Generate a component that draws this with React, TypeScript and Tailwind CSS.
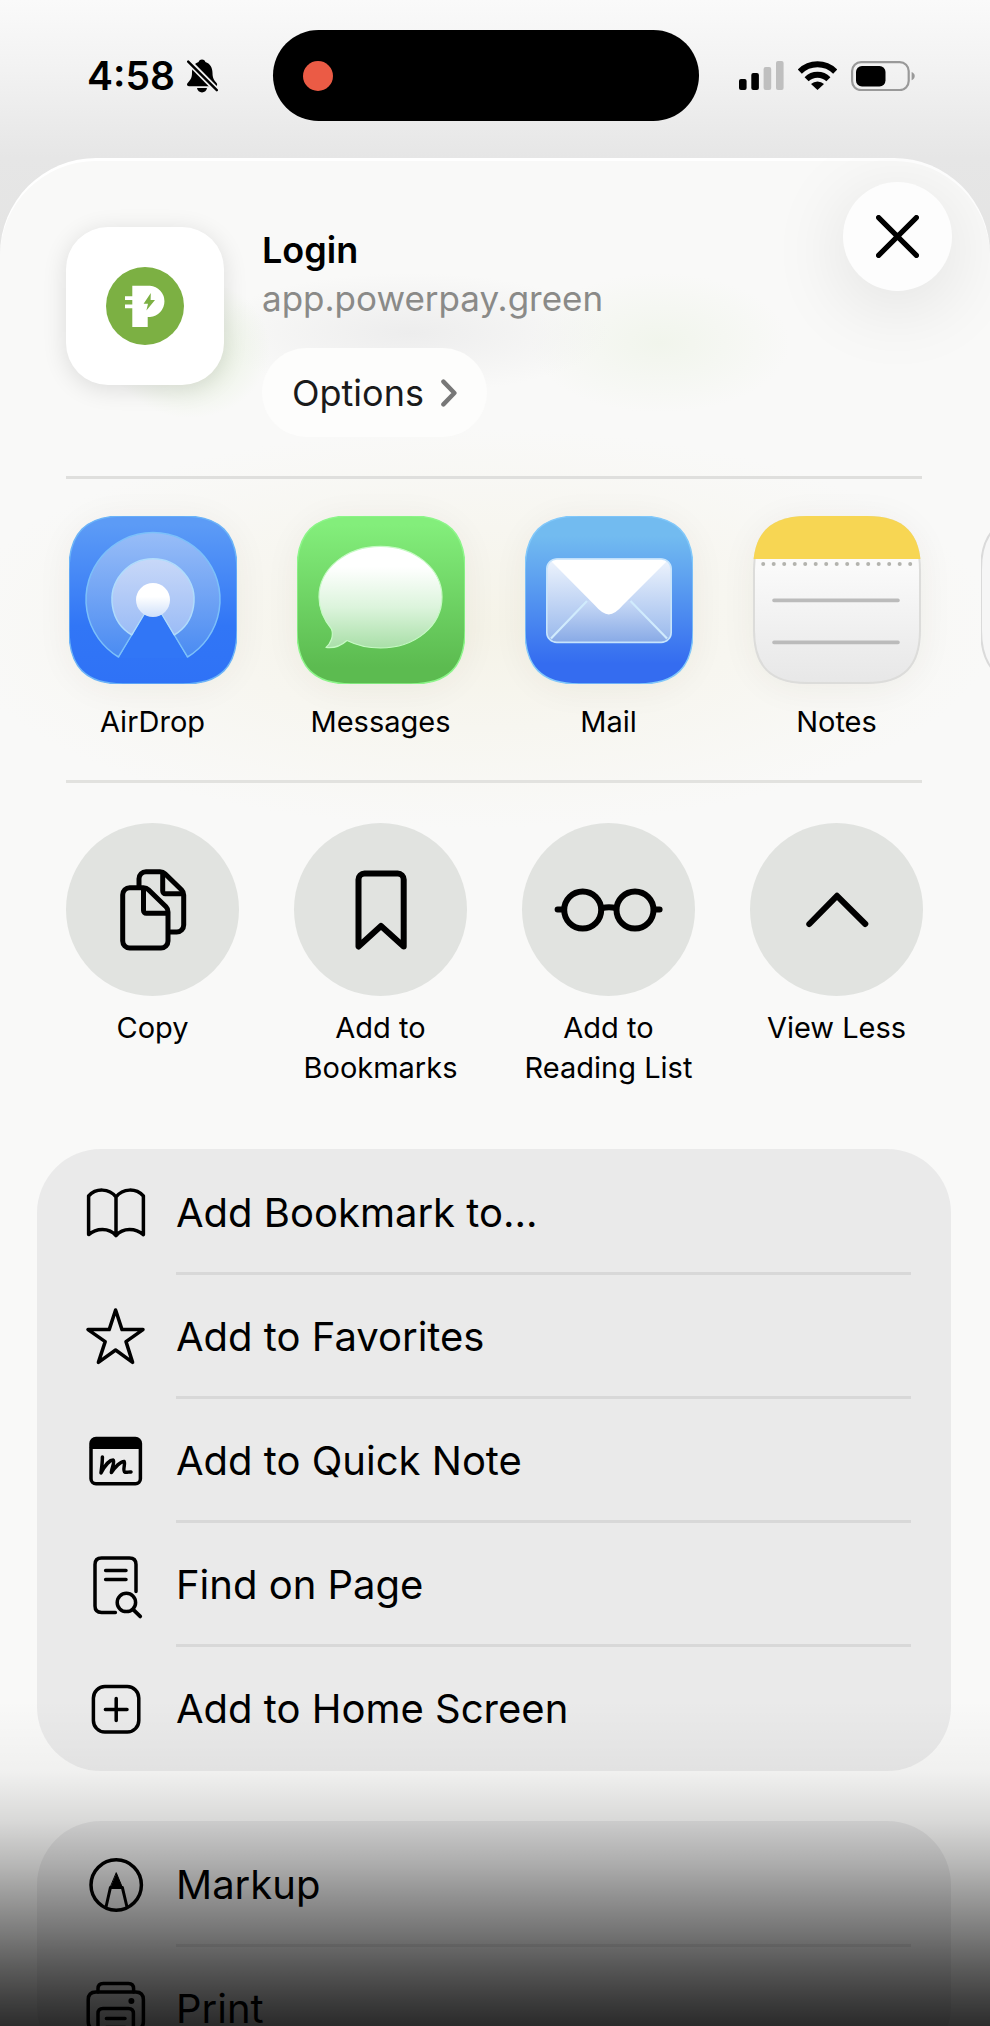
import type { ReactNode } from 'react';

interface Item {
  label: string;
  icon: ReactNode;
}

const SQUIRCLE =
  'M0 54C0 17 17 0 54 0H114C151 0 168 17 168 54V114C168 151 151 168 114 168H54C17 168 0 151 0 114Z';

function BellOff() {
  return (
    <svg className="h-[34px] w-[31px]" viewBox="0 0 31 34" aria-hidden="true">
      <mask id="bell-cut">
        <rect width="31" height="34" fill="#fff" />
        <path d="M-1 0L32 33.5" stroke="#000" strokeWidth="6" />
      </mask>
      <g mask="url(#bell-cut)">
        <path d="M15 .5C17 .5 18 1.6 18.4 3C23 4.5 25.5 8.5 25.5 14C25.5 19.5 27.5 21.5 29.5 24C30.8 25.8 30 27.3 28 27.3H2C0 27.3-.6 25.6.6 24C2.6 21.6 5 20 5 14C5 8.5 7 4.5 11.6 3C12 1.6 13 .5 15 .5Z" />
        <path d="M10 29H20C19.6 31.8 17.6 33.4 15 33.4S10.4 31.8 10 29Z" />
      </g>
      <path d="M1.2 2.6L29.8 31.2" stroke="#000" strokeWidth="2.4" strokeLinecap="round" />
    </svg>
  );
}

function Signal() {
  return (
    <svg className="h-[30px] w-[45px]" viewBox="0 0 45 30" aria-hidden="true">
      <rect x="0" y="18" width="7.6" height="11" rx="2" />
      <rect x="12.3" y="12" width="7.6" height="17" rx="2" />
      <rect x="24.6" y="6" width="7.6" height="23" rx="2" fill="#bfbfbf" />
      <rect x="37" y="0" width="7.6" height="29" rx="2" fill="#bfbfbf" />
    </svg>
  );
}

function Wifi() {
  return (
    <svg className="h-[30px] w-[39px]" viewBox="0 0 39 30" aria-hidden="true">
      <g fill="none" stroke="#000" strokeWidth="5.8">
        <path d="M1.8 10.6A25 25 0 0 1 37.2 10.6" />
        <path d="M8.6 18.2A15.6 15.6 0 0 1 30.4 18.2" />
      </g>
      <path d="M19.5 29L13 23A9.4 9.4 0 0 1 26 23Z" />
    </svg>
  );
}

function Battery() {
  return (
    <svg className="h-[30px] w-[64px]" viewBox="0 0 64 30" aria-hidden="true">
      <rect x="1.1" y="1.1" width="56.6" height="28" rx="9" fill="none" stroke="#999" strokeWidth="2.2" />
      <rect x="5" y="5" width="29.5" height="20.5" rx="6" />
      <path d="M60.6 11C64.8 12.4 64.8 17.8 60.6 19.2Z" fill="#999" />
    </svg>
  );
}

function PowerPayLogo() {
  return (
    <svg className="size-[78px]" viewBox="0 0 78 78" aria-hidden="true">
      <circle cx="39" cy="39" r="39" fill="#7cb043" />
      <path
        d="M26.3 18.7H44A15.7 15.7 0 0 1 44 50H41.7V60H26.3V41.2H19V37.4H26.3V33H19V29.2H26.3Z"
        fill="#fff"
      />
      <path d="M44.8 26L37.6 36.8H42L40.4 43.4L49 33H44.6Z" fill="#7cb043" />
    </svg>
  );
}

function AirDropIcon() {
  return (
    <svg viewBox="0 0 168 168" aria-hidden="true">
      <defs>
        <linearGradient id="ad-bg" x1="0" y1="0" x2="0" y2="1">
          <stop offset=".05" stopColor="#5c9bf6" />
          <stop offset=".65" stopColor="#3176f6" />
          <stop offset="1" stopColor="#2f72f6" />
        </linearGradient>
        <linearGradient id="ad-outer" x1="0" y1="0" x2="0" y2="1">
          <stop offset="0" stopColor="#98bdf7" />
          <stop offset="1" stopColor="#4a8bf2" />
        </linearGradient>
        <linearGradient id="ad-inner" x1="0" y1="0" x2="0" y2="1">
          <stop offset="0" stopColor="#c8d8f8" />
          <stop offset="1" stopColor="#9bbcf6" />
        </linearGradient>
        <linearGradient id="ad-dot" x1="0" y1="0" x2="0" y2="1">
          <stop offset=".4" stopColor="#fff" />
          <stop offset="1" stopColor="#cfe0fa" />
        </linearGradient>
      </defs>
      <path d={SQUIRCLE} fill="url(#ad-bg)" stroke="#6cb4f8" strokeWidth="1.5" />
      <path
        d="M49.5 141A67 67 0 1 1 118.5 141L84 84Z"
        fill="url(#ad-outer)"
        stroke="#7cc0fa"
        strokeWidth="1.5"
        strokeLinejoin="round"
      />
      <path
        d="M62.9 119A41 41 0 1 1 105.1 119L84 84Z"
        fill="url(#ad-inner)"
        stroke="#b0dcfc"
        strokeWidth="1.5"
        strokeLinejoin="round"
      />
      <path d="M75.5 99L51 140.5V142H117V140.5L92.5 99Z" fill="#3176f6" />
      <circle cx="84" cy="84" r="17" fill="url(#ad-dot)" />
    </svg>
  );
}

function MessagesIcon() {
  return (
    <svg viewBox="0 0 168 168" aria-hidden="true">
      <defs>
        <linearGradient id="ms-bg" x1="0" y1="0" x2="0" y2="1">
          <stop offset=".05" stopColor="#83ee7b" />
          <stop offset=".9" stopColor="#5cbb50" />
        </linearGradient>
        <linearGradient id="ms-bubble" x1="0" y1="0" x2="0" y2="1">
          <stop offset=".2" stopColor="#fff" />
          <stop offset=".6" stopColor="#dcf4dc" />
          <stop offset="1" stopColor="#a9dfa8" />
        </linearGradient>
      </defs>
      <path d={SQUIRCLE} fill="url(#ms-bg)" stroke="#8df58a" strokeWidth="1.5" />
      <path
        d="M83.5 30.3C118 30.3 145 53 145 81C145 110 118 132 83.5 132C71 132 60 129.5 50 124.5C45 129 37 132.5 29 131.5C33.5 128 37 120 34.5 113C27 104 22 94 22 81C22 53 49 30.3 83.5 30.3Z"
        fill="url(#ms-bubble)"
        stroke="#c6fac4"
        strokeWidth="1.2"
        strokeLinejoin="round"
      />
    </svg>
  );
}

function MailIcon() {
  return (
    <svg viewBox="0 0 168 168" aria-hidden="true">
      <defs>
        <linearGradient id="ml-bg" x1="0" y1="0" x2="0" y2="1">
          <stop offset=".12" stopColor="#72bbf0" />
          <stop offset=".88" stopColor="#346cf0" />
        </linearGradient>
        <linearGradient id="ml-env" x1="0" y1="0" x2="0" y2="1">
          <stop offset="0" stopColor="#eef4fd" />
          <stop offset="1" stopColor="#98b8ec" />
        </linearGradient>
        <linearGradient id="ml-low" x1="0" y1="0" x2="0" y2="1">
          <stop offset=".1" stopColor="#c9daf6" />
          <stop offset="1" stopColor="#88aae6" />
        </linearGradient>
      </defs>
      <path d={SQUIRCLE} fill="url(#ml-bg)" stroke="#82c8fa" strokeWidth="1.5" />
      <rect x="21.8" y="43" width="124.4" height="83.4" rx="10" fill="url(#ml-env)" />
      <path d="M26 123L62 85L83.7 80L105 85L142 123Q138 126.4 134 126.4H34Q29 126.4 26 123Z" fill="url(#ml-low)" />
      <path d="M62 85L26 122.6M105.5 85L142 122.6" fill="none" stroke="#d0ebfd" strokeWidth="2.2" />
      <path d="M26 45Q29 42.6 33 42.6H135Q139 42.6 142 45L98 89Q90 98.4 83.8 98.4T69.6 89Z" fill="#fff" />
      <rect x="21.8" y="43" width="124.4" height="83.4" rx="10" fill="none" stroke="#c6e4fc" strokeWidth="1.6" />
    </svg>
  );
}

function NotesIcon() {
  return (
    <svg viewBox="0 0 168 168" aria-hidden="true">
      <defs>
        <clipPath id="nt-clip">
          <path d={SQUIRCLE} />
        </clipPath>
        <linearGradient id="nt-bg" x1="0" y1="0" x2="0" y2="1">
          <stop offset=".3" stopColor="#fafafa" />
          <stop offset="1" stopColor="#e7e7e7" />
        </linearGradient>
      </defs>
      <g clipPath="url(#nt-clip)">
        <path d={SQUIRCLE} fill="url(#nt-bg)" stroke="#dcdcda" strokeWidth="4" />
        <rect width="168" height="43" fill="#f7d653" />
      </g>
      {Array.from({ length: 15 }, (_, i) => (
        <circle key={i} cx={10.2 + i * 10.5} cy="48" r="2" fill="#b3b3ae" />
      ))}
      <path d="M21 84.4H145M21 126.4H145" stroke="#bbb" strokeWidth="3.6" strokeLinecap="round" />
    </svg>
  );
}

function BlankIcon() {
  return (
    <svg viewBox="0 0 168 168" aria-hidden="true">
      <path d={SQUIRCLE} fill="#f6f6f6" stroke="#dadada" strokeWidth="2" />
    </svg>
  );
}

function ActionSvg({ children }: { children: ReactNode }) {
  return (
    <svg
      className="size-24 overflow-visible"
      viewBox="0 0 96 96"
      fill="none"
      stroke="#000"
      strokeWidth="6"
      strokeLinecap="round"
      strokeLinejoin="round"
      aria-hidden="true"
    >
      {children}
    </svg>
  );
}

function RowSvg({ children }: { children: ReactNode }) {
  return (
    <svg
      className="size-16 shrink-0 overflow-visible"
      viewBox="0 0 64 64"
      fill="none"
      stroke="#000"
      strokeWidth="3.5"
      strokeLinecap="round"
      strokeLinejoin="round"
      aria-hidden="true"
    >
      {children}
    </svg>
  );
}

const apps: Item[] = [
  { label: 'AirDrop', icon: <AirDropIcon /> },
  { label: 'Messages', icon: <MessagesIcon /> },
  { label: 'Mail', icon: <MailIcon /> },
  { label: 'Notes', icon: <NotesIcon /> },
];

const actions: Item[] = [
  {
    label: 'Copy',
    icon: (
      <ActionSvg>
        <g strokeWidth="5">
          <path d="M34 25V16.7A7 7 0 0 1 41 9.7H55Q58 9.7 60 11.7L76.7 28Q78.7 30 78.7 33V63A7 7 0 0 1 71.7 70H64" />
          <path d="M57.7 11V29A2.7 2.7 0 0 0 60.4 31.7H77" />
          <path d="M63 50V79A7 7 0 0 1 56 86H24.7A7 7 0 0 1 17.7 79V32.7A7 7 0 0 1 24.7 25.7H38.5Q41.5 25.7 43.5 27.7L61 44.7Q63 46.7 63 50Z" />
          <path d="M38.5 27V48.6A2.7 2.7 0 0 0 41.2 51.3H62" />
        </g>
      </ActionSvg>
    ),
  },
  {
    label: 'Add to Bookmarks',
    icon: (
      <ActionSvg>
        <path d="M25.5 84.5V17.5A6 6 0 0 1 31.5 11.5H64.7A6 6 0 0 1 70.7 17.5V84.5L48 64Z" />
      </ActionSvg>
    ),
  },
  {
    label: 'Add to Reading List',
    icon: (
      <ActionSvg>
        <circle cx="21.7" cy="48" r="18.5" />
        <circle cx="74" cy="48" r="18.5" />
        <path d="M41 46Q48 44.4 55 46M-3.4 47.4H2M94 47.4H98.6" />
      </ActionSvg>
    ),
  },
  {
    label: 'View Less',
    icon: (
      <ActionSvg>
        <path d="M20.3 62L48 33.8L76.3 62" />
      </ActionSvg>
    ),
  },
];

const bookmarkRows: Item[] = [
  {
    label: 'Add Bookmark to...',
    icon: (
      <RowSvg>
        <path d="M32 16C25 7 12 7 4.6 15V53.6C12 47 25 46 32 54.6C39 46 52 47 59.4 53.6V15C52 7 39 7 32 16ZM32 16V54" />
      </RowSvg>
    ),
  },
  {
    label: 'Add to Favorites',
    icon: (
      <RowSvg>
        <path d="M31.6 5L38 24.6H59L42 36.6L48.6 57.4L31.6 45L14.4 57.4L21.2 36.6L4 24.6H25.2Z" />
      </RowSvg>
    ),
  },
  {
    label: 'Add to Quick Note',
    icon: (
      <RowSvg>
        <rect x="7" y="9.6" width="49.4" height="45.2" rx="5" />
        <path d="M7 20V14.6Q7 9.6 12 9.6H51.4Q56.4 9.6 56.4 14.6V20Z" fill="#000" stroke="none" />
        <path d="M7 18.4H56.4" strokeWidth="2.4" />
        <path d="M18.4 28C18.4 34 17.6 39 17 44C21 36 26 31 29.2 31C31.4 32 27 41 27.4 43.6C31 38 36.6 32.4 40 32.4C42 33.4 38 42 41 43.2C43 43.8 45 42.6 47 43" />
      </RowSvg>
    ),
  },
  {
    label: 'Find on Page',
    icon: (
      <RowSvg>
        <path d="M31.4 59.4H17.6Q11 59.4 11 53V11.6Q11 5 17.6 5H45.4Q52 5 52 11.6V38.6" />
        <path d="M21.6 17.4H42M21.6 26.6H42" />
        <circle cx="42.4" cy="49.4" r="9.2" />
        <path d="M49 56.4L56.2 63.4" strokeWidth="3.8" />
      </RowSvg>
    ),
  },
  {
    label: 'Add to Home Screen',
    icon: (
      <RowSvg>
        <rect x="9.4" y="9.6" width="45.4" height="45.4" rx="11.5" />
        <path d="M32.2 21.6V43.4M21.4 32.5H43" />
      </RowSvg>
    ),
  },
];

const toolRows: Item[] = [
  {
    label: 'Markup',
    icon: (
      <RowSvg>
        <circle cx="32.2" cy="32" r="25.2" />
        <path d="M22 54L26.4 34.6H38.4L43 54" strokeWidth="3" />
        <path d="M32.4 20L38.6 35H26.2Z" fill="#000" strokeWidth="1" />
      </RowSvg>
    ),
  },
  {
    label: 'Print',
    icon: (
      <RowSvg>
        <path d="M14 15V11.6Q14 6.4 19.2 6.4H44.4Q49.6 6.4 49.6 11.6V15" />
        <path d="M12 52.4Q4.2 52.4 4.2 44.6V22.8Q4.2 15 12 15H51.6Q59.4 15 59.4 22.8V44.6Q59.4 52.4 51.6 52.4" />
        <path d="M14 60V36.4Q14 31.4 19 31.4H44.4Q49.4 31.4 49.4 36.4V60Z" />
        <path d="M22.4 41.4H41M22.4 50.4H41" />
        <circle cx="47.4" cy="24" r="3" fill="#000" stroke="none" />
      </RowSvg>
    ),
  },
];

function StatusBar() {
  return (
    <header className="grid h-[158px] shrink-0 grid-cols-[273px_426px_1fr] pt-[30px]">
      <div className="flex h-[92px] items-center gap-3 pl-[87px]">
        <time className="text-[39px] leading-[48px] font-semibold">4:58</time>
        <BellOff />
      </div>
      <div className="flex h-[91px] items-center rounded-full bg-black pl-[30px]">
        <span className="size-[30px] rounded-full bg-[#eb5b45]" />
      </div>
      <div className="flex h-[92px] items-center gap-[14px] pl-10">
        <Signal />
        <Wifi />
        <Battery />
      </div>
    </header>
  );
}

function MenuCard({ rows }: { rows: Item[] }) {
  return (
    <ul className="mr-[2px] shrink-0 rounded-[64px] bg-[#eaeaea] pt-[2px]">
      {rows.map((row, i) => (
        <li key={row.label}>
          <button type="button" className="flex h-[124px] w-full items-center gap-7 pl-[47px] text-left">
            {row.icon}
            <span
              className={
                i < rows.length - 1
                  ? 'mr-10 flex h-full flex-1 items-center border-b-3 border-[#d8d8d8] pt-[3px]'
                  : 'mr-10 flex h-full flex-1 items-center'
              }
            >
              {row.label}
            </span>
          </button>
        </li>
      ))}
    </ul>
  );
}

export default function App() {
  return (
    <div className="relative flex h-screen flex-col overflow-hidden bg-[linear-gradient(#fafafa,#f2f2f2_70px,#e6e6e6_158px,#e4e4e3_260px)] font-[Inter,sans-serif] text-black">
      <StatusBar />

      <main className="flex min-h-0 flex-1 flex-col overflow-hidden rounded-t-[96px] bg-[#f9f9f8] bg-[radial-gradient(80px_70px_at_190px_190px,#e3efd8,transparent),radial-gradient(200px_60px_at_410px_175px,#ededed,transparent),radial-gradient(130px_70px_at_660px_185px,#f1f5ec,transparent),radial-gradient(520px_200px_at_48%_470px,#f5f3e8,transparent)] shadow-[inset_0_3px_0_#fff]">
        <section className="flex items-start pt-6 pr-[38px] pb-[39px] pl-[66px]">
          <div className="mt-[45px] flex size-[158px] shrink-0 items-center justify-center rounded-[42px] bg-white shadow-[0_4px_24px_rgba(0,0,0,0.12)]">
            <PowerPayLogo />
          </div>
          <div className="ml-[38px] flex-1 pt-[44px]">
            <h1 className="text-[36px] leading-[48px] font-semibold">Login</h1>
            <p className="text-[35px] leading-[48px] text-[#8a8a88]">app.powerpay.green</p>
            <button
              type="button"
              className="mt-[26px] flex h-[89px] items-center gap-[17px] rounded-full bg-[#fdfdfc] px-[30px] text-[36px] text-[#1a1a1a]"
            >
              Options
              <svg className="h-7 w-4" viewBox="0 0 16 28" fill="none" aria-hidden="true">
                <path d="M2.4 2.6L13.4 14L2.4 25.4" stroke="#777" strokeWidth="4.4" strokeLinecap="round" strokeLinejoin="round" />
              </svg>
            </button>
          </div>
          <button
            type="button"
            aria-label="Close"
            className="flex size-[109px] shrink-0 items-center justify-center rounded-full bg-[#fdfdfd] shadow-[0_14px_80px_rgba(0,0,0,0.11)]"
          >
            <svg className="size-[43px]" viewBox="0 0 43 43" aria-hidden="true">
              <path d="M2.6 2.6L40.4 40.4M40.4 2.6L2.6 40.4" stroke="#000" strokeWidth="5.2" strokeLinecap="round" />
            </svg>
          </button>
        </section>

        <hr className="mx-[66px] mr-[68px] border-t-3 border-[#dfdfdd]" />

        <ul className="flex gap-[55px] pt-[37px] pb-[38px] pl-[66px]">
          {apps.map((app) => (
            <li key={app.label} className="w-[173px] shrink-0">
              <button type="button" className="flex w-full flex-col items-center text-[29px] leading-10">
                <span className="size-[168px] rounded-[48px] shadow-[0_4px_36px_rgba(60,50,0,0.06)]">{app.icon}</span>
                <span className="mt-[18px]">{app.label}</span>
              </button>
            </li>
          ))}
          <li className="w-[173px] shrink-0">
            <div className="mx-auto size-[168px]">
              <BlankIcon />
            </div>
          </li>
        </ul>

        <hr className="mx-[66px] mr-[68px] border-t-3 border-[#e2e2df]" />

        <ul className="flex gap-[55px] pt-[40px] pb-[61px] pl-[66px]">
          {actions.map((action) => (
            <li key={action.label} className="w-[173px] shrink-0">
              <button type="button" className="flex w-full flex-col items-center text-[29px] leading-10">
                <span className="flex size-[173px] items-center justify-center rounded-full bg-[#e1e3e0]">
                  {action.icon}
                </span>
                <span className="mt-3">{action.label}</span>
              </button>
            </li>
          ))}
        </ul>

        <div className="flex flex-col gap-[50px] px-[37px] text-[40px] leading-[48px]">
          <MenuCard rows={bookmarkRows} />
          <MenuCard rows={toolRows} />
        </div>
      </main>

      {/* dark fade over the bottom of the sheet */}
      <div className="pointer-events-none absolute inset-x-0 bottom-0 h-[326px] bg-[linear-gradient(rgba(0,0,0,0),rgba(0,0,0,0.035)_22%,rgba(0,0,0,0.13)_37%,rgba(0,0,0,0.27)_51%,rgba(0,0,0,0.39)_61%,rgba(0,0,0,0.5)_71%,rgba(0,0,0,0.63)_82%,rgba(0,0,0,0.74)_92%,rgba(0,0,0,0.82))]" />
    </div>
  );
}
